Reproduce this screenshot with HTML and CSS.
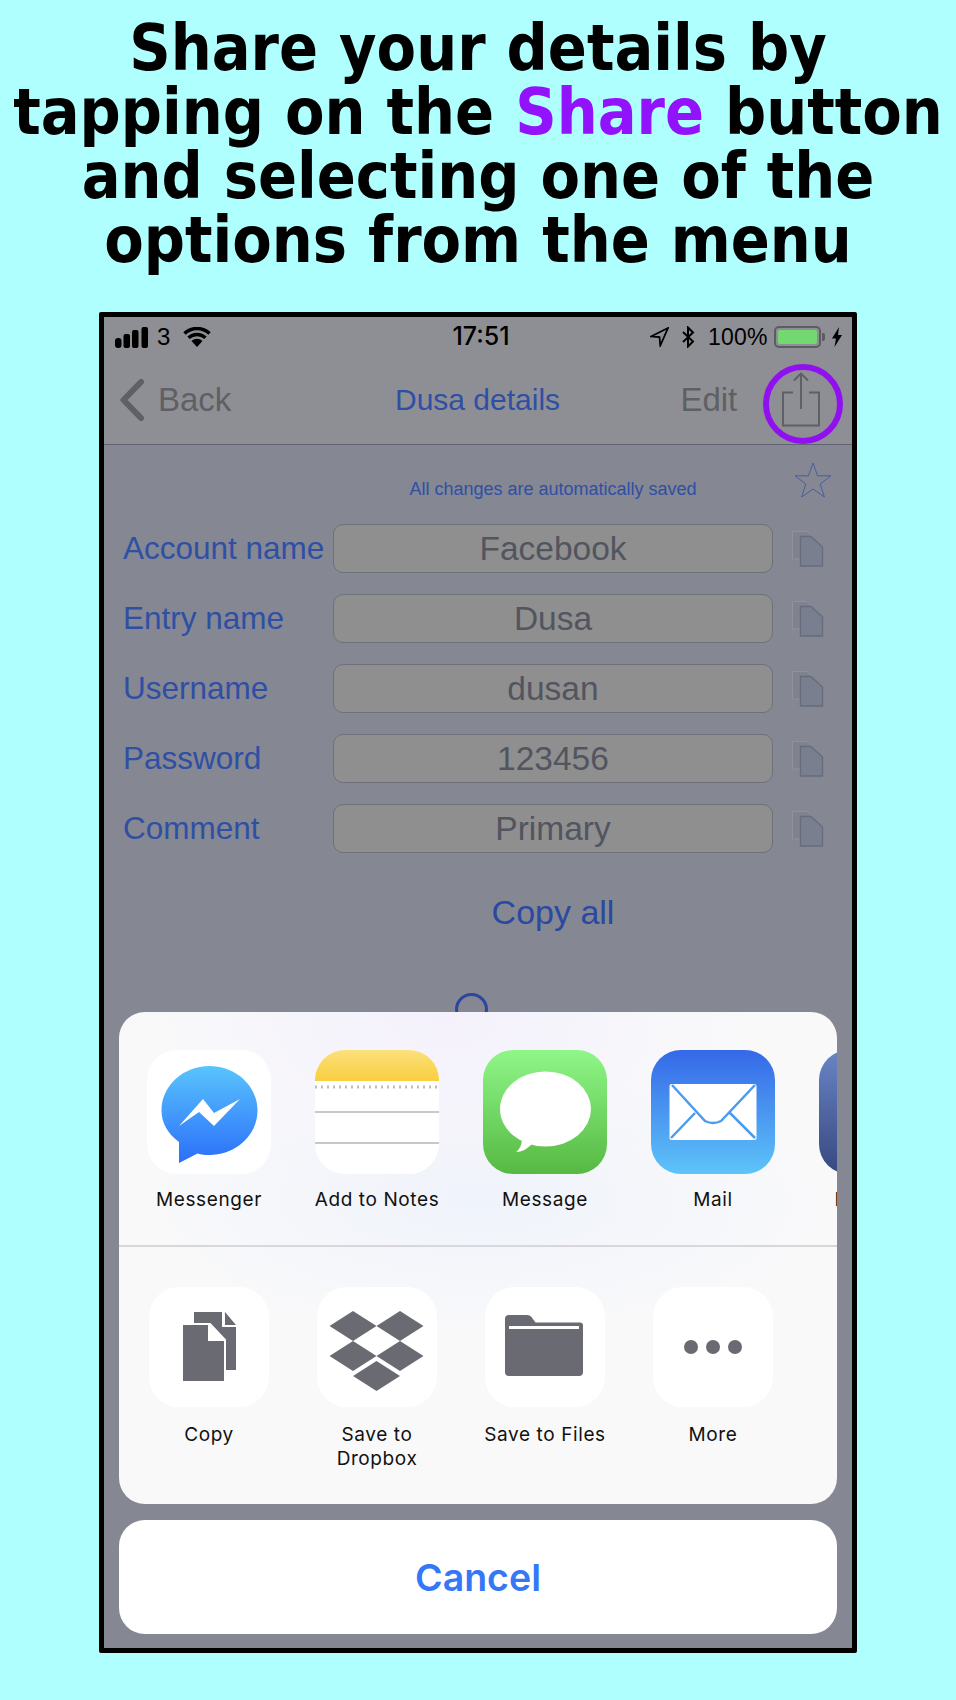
FILE: index.html
```html
<!DOCTYPE html>
<html lang="en">
<head>
<meta charset="utf-8">
<title>Share your details</title>
<link rel="stylesheet" href="styles.css">
</head>
<body>
<h1 class="headline">Share your details by<br>tapping on the <span class="accent">Share</span> button<br>and selecting one of the<br>options from the menu</h1>
<main class="phone">
  <div class="topbar">
    <div class="status">
      <div class="status-left">
        <svg class="signal" width="34" height="21" viewBox="0 0 34 21"><rect x="0" y="11" width="6.500" height="10" rx="3"/><rect x="8.500" y="7" width="6.500" height="14" rx="2"/><rect x="17" y="3" width="6.500" height="18" rx="2"/><rect x="26.500" y="0" width="6.500" height="21" rx="2"/></svg>
        <span class="carrier">3</span>
        <svg class="wifi" width="28" height="20" viewBox="0 0 28 20"><path d="M1.500 6.500a18 18 0 0 1 25 0M5.500 10.800a12.500 12.500 0 0 1 17 0" fill="none" stroke="#000" stroke-width="3.400"/><path d="M14 20L8.500 14a8 8 0 0 1 11 0z"/></svg>
      </div>
      <div class="clock">17:51</div>
      <div class="status-right">
        <svg width="19" height="20" viewBox="0 0 19 20"><path d="M18 1L1 9.500l8.500.5.800 8.500z" fill="none" stroke="#000" stroke-width="1.800"/></svg>
        <svg class="bt" width="14" height="22" viewBox="0 0 14 22"><path d="M2 6l10 9.500-5 5V1.500l5 5L2 16" fill="none" stroke="#000" stroke-width="2"/></svg>
        <span class="percent">100%</span>
        <div class="battery"><div class="battery-fill"></div></div>
        <div class="battery-cap"></div>
        <svg class="bolt" width="10" height="20" viewBox="0 0 10 20"><path d="M7 0L0 11.500h4L2.500 20 10 8H6z"/></svg>
      </div>
    </div>
    <nav class="nav">
      <svg class="chevron" width="24" height="42" viewBox="0 0 24 42"><path d="M21 3L3.500 21 21 39" fill="none" stroke="#5f6064" stroke-width="6" stroke-linecap="round" stroke-linejoin="round"/></svg>
      <span class="nav-back">Back</span>
      <span class="nav-title">Dusa details</span>
      <span class="nav-edit">Edit</span>
      <svg class="share" width="40" height="56" viewBox="0 0 40 56"><path d="M12 20.500H2v33h36v-33H28M20 37V2M13 8.500l7-7 7 7" fill="none" stroke="#5f6064" stroke-width="2"/></svg>
    </nav>
    <div class="ring"></div>
  </div>

  <section class="content">
    <div class="row notice-row">
      <span></span>
      <p class="notice">All changes are automatically saved</p>
      <svg class="star" width="38" height="36" viewBox="0 0 38 36"><path d="M19 1l4.600 12.800H37L26.200 22l4.200 13L19 27 7.600 35l4.200-13L1 13.800h13.400z" fill="none" stroke="#3a53a6" stroke-width=".8"/></svg>
    </div>
    <div class="row"><label class="label">Account name</label><div class="field">Facebook</div><svg class="dup" width="32" height="36" viewBox="0 0 32 36"><use href="#pages"/></svg></div>
    <div class="row"><label class="label">Entry name</label><div class="field">Dusa</div><svg class="dup" width="32" height="36" viewBox="0 0 32 36"><use href="#pages"/></svg></div>
    <div class="row"><label class="label">Username</label><div class="field">dusan</div><svg class="dup" width="32" height="36" viewBox="0 0 32 36"><use href="#pages"/></svg></div>
    <div class="row"><label class="label">Password</label><div class="field">123456</div><svg class="dup" width="32" height="36" viewBox="0 0 32 36"><use href="#pages"/></svg></div>
    <div class="row"><label class="label">Comment</label><div class="field">Primary</div><svg class="dup" width="32" height="36" viewBox="0 0 32 36"><use href="#pages"/></svg></div>
    <div class="row copy-row"><span></span><div class="copy-all">Copy all</div></div>
    <div class="spinner"></div>
  </section>

  <div class="overlay">
    <div class="sheet">
      <div class="apps">
        <div class="cell"><svg class="tile" viewBox="0 0 124 124"><defs><linearGradient id="gm" x1="0" y1="0" x2="0" y2="1"><stop offset="0" stop-color="#5ac4fd"/><stop offset="1" stop-color="#2a6ffa"/></linearGradient></defs><rect width="124" height="124" rx="30" fill="#fff"/><path d="M62.500 16c26.500 0 48 20 48 44.500S89 105 62.500 105c-4.500 0-8-.5-12-1.500L32 113V92C21 84 14.500 73 14.500 60.500 14.500 36 36 16 62.500 16z" fill="url(#gm)"/><path d="M32 76l24-27 11 14 26-14-26 27-15-14z" fill="#fff"/></svg><span class="cap">Messenger</span></div>
        <div class="cell"><svg class="tile" viewBox="0 0 124 124"><defs><linearGradient id="gn" x1="0" y1="0" x2="0" y2="1"><stop offset="0" stop-color="#fbe07c"/><stop offset="1" stop-color="#f9cf3e"/></linearGradient><clipPath id="cn"><rect width="124" height="124" rx="30"/></clipPath></defs><g clip-path="url(#cn)"><rect width="124" height="124" fill="#fff"/><rect width="124" height="31" fill="url(#gn)"/><line x1="0" x2="124" y1="37" y2="37" stroke="#bdbdc2" stroke-width="3" stroke-dasharray="2 4"/><line x1="0" x2="124" y1="62" y2="62" stroke="#c8c7cc" stroke-width="2"/><line x1="0" x2="124" y1="93" y2="93" stroke="#c8c7cc" stroke-width="2"/></g></svg><span class="cap">Add to Notes</span></div>
        <div class="cell"><svg class="tile" viewBox="0 0 124 124"><defs><linearGradient id="gs" x1="0" y1="0" x2="0" y2="1"><stop offset="0" stop-color="#8ff788"/><stop offset="1" stop-color="#55b942"/></linearGradient></defs><rect width="124" height="124" rx="30" fill="url(#gs)"/><ellipse cx="62.500" cy="59" rx="45.500" ry="37.500" fill="#fff"/><path d="M39 88c0 6-2 11-6 14 6 0 11-3 16-8z" fill="#fff"/></svg><span class="cap">Message</span></div>
        <div class="cell"><svg class="tile" viewBox="0 0 124 124"><defs><linearGradient id="gl" x1="0" y1="0" x2="0" y2="1"><stop offset="0" stop-color="#3568e8"/><stop offset="1" stop-color="#5ec4f9"/></linearGradient></defs><rect width="124" height="124" rx="30" fill="url(#gl)"/><rect x="18.500" y="34" width="87" height="56" rx="2" fill="#fff"/><path d="M21 35l33 36q8 4 16 0l34-36M20 88l24-25M104 88L79 63" fill="none" stroke="#4a9cef" stroke-width="2.500"/></svg><span class="cap">Mail</span></div>
        <div class="cell"><svg class="tile" viewBox="0 0 124 124"><defs><linearGradient id="gf" x1="0" y1="0" x2="0" y2="1"><stop offset="0" stop-color="#6a84c6"/><stop offset="1" stop-color="#36487f"/></linearGradient></defs><rect width="124" height="124" rx="30" fill="url(#gf)"/></svg><span class="cap">Facebook</span></div>
      </div>
      <div class="actions">
        <div class="cell"><svg class="tile small" viewBox="0 0 120 120"><rect width="120" height="120" rx="30" fill="#fff"/><path d="M45 25h29l13 14v44H45z" fill="#6a6a72"/><path d="M74 25v14h13" fill="#fff" stroke="#fff" stroke-width="2"/><path d="M76 25l11 13H76z" fill="#6a6a72"/><path d="M33 37h28l15 16v42H33z" fill="#6a6a72" stroke="#fff" stroke-width="2"/><path d="M60 37v16h16" fill="#fff" stroke="#fff" stroke-width="2"/></svg><span class="cap">Copy</span></div>
        <div class="cell"><svg class="tile small" viewBox="0 0 120 120"><rect width="120" height="120" rx="30" fill="#fff"/><path d="M36 24l23.500 15L36 54 12.500 39zM83 24l23.500 15L83 54 59.500 39zM36 54l23.500 15L36 84 12.500 69zM83 54l23.500 15L83 84 59.500 69zM59.500 74l23.500 15-23.500 15L36 89z" fill="#6a6a72"/></svg><span class="cap">Save to<br>Dropbox</span></div>
        <div class="cell"><svg class="tile small" viewBox="0 0 120 120"><rect width="120" height="120" rx="30" fill="#fff"/><path d="M24 28h18q3 0 4.500 2l4 5.500H95q3 0 3 3V85q0 4-4 4H24q-4 0-4-4V32q0-4 4-4z" fill="#6a6a72"/><path d="M24 40.500h70" stroke="#fff" stroke-width="3" fill="none"/></svg><span class="cap">Save to Files</span></div>
        <div class="cell"><svg class="tile small" viewBox="0 0 120 120"><rect width="120" height="120" rx="30" fill="#fff"/><circle cx="38" cy="60" r="7" fill="#6a6a72"/><circle cx="60" cy="60" r="7" fill="#6a6a72"/><circle cx="82" cy="60" r="7" fill="#6a6a72"/></svg><span class="cap">More</span></div>
      </div>
    </div>
    <button class="cancel" type="button">Cancel</button>
  </div>
</main>
<svg class="defs" width="0" height="0"><defs><g id="pages"><path d="M.5.500H15l5 5V28H.5z" fill="#7f828f" stroke="#8f919c" stroke-width="1"/><path d="M8.500 5.500H19L30.500 16v19H8.500z" fill="#797f8f" stroke="#666c7e" stroke-width="1.300"/></g></defs></svg>
</body>
</html>
```

FILE: styles.css
```css
* { box-sizing: border-box; }
html, body { margin: 0; padding: 0; }
body {
  width: 956px;
  height: 1700px;
  background: #b0ffff;
  font-family: "Liberation Sans", Arial, sans-serif;
  overflow: hidden;
}
.headline {
  margin: 0;
  height: 312px;
  padding-top: 16px;
  text-align: center;
  font-family: "DejaVu Sans", sans-serif;
  font-stretch: condensed;
  font-weight: 700;
  font-size: 64px;
  word-spacing: 1px;
  line-height: 64px;
  color: #000;
  white-space: nowrap;
}
.accent { color: #9212fb; }
.phone {
  position: relative;
  margin-left: 99px;
  width: 758px;
  height: 1341px;
  border: 5px solid #000;
  border-radius: 2px;
  background: #858792;
  overflow: hidden;
}
.topbar {
  position: relative;
  height: 128px;
  background: #8e8f94;
  border-bottom: 1px solid #5f6270;
}
.status {
  height: 40px;
  display: flex;
  align-items: center;
  justify-content: space-between;
  padding: 0 10px 0 11px;
  color: #000;
  font-size: 22px;
  position: relative;
}
.status-left, .status-right { display: flex; align-items: center; }
.status-left { gap: 8px; }
.carrier { width: 17px; font-size: 24px; }
.wifi { margin-left: 1px; }
.clock {
  position: absolute;
  left: 0;
  right: 0;
  top: 4px;
  padding-left: 6px;
  text-align: center;
  font-family: "Inter", sans-serif;
  font-weight: 500;
  font-size: 25px;
  line-height: 30px;
}
.bt { margin-left: 12px; }
.percent { margin-left: 13px; font-size: 23px; letter-spacing: .2px; width: 66px; }
.battery {
  width: 47px;
  height: 22px;
  border: 2px solid #5c5d60;
  border-radius: 5px;
  padding: 2px;
}
.battery-fill { width: 100%; height: 100%; background: #74d872; border-radius: 2px; }
.battery-cap { width: 3px; height: 8px; background: #5c5d60; margin-left: 1px; border-radius: 0 2px 2px 0; }
.bolt { margin-left: 7px; }
.nav {
  position: relative;
  display: flex;
  align-items: center;
  height: 85px;
  padding-left: 16px;
}
.nav-back { margin-left: 14px; font-size: 33px; color: #5f6064; }
.nav-title {
  position: absolute;
  left: 291px;
  font-size: 30px;
  color: #2f4fa5;
}
.nav-edit { margin-left: 449px; font-size: 33px; color: #5f6064; }
.share { margin-left: 44px; }
.ring {
  position: absolute;
  left: 659px;
  top: 47px;
  width: 80px;
  height: 80px;
  border: 6px solid #9010ef;
  border-radius: 50%;
}
.content { padding: 16px 0 0 19px; }
.row {
  display: grid;
  grid-template-columns: 210px 440px 52px;
  align-items: center;
  margin-bottom: 21px;
}
.notice-row { height: 36px; margin-bottom: 27px; }
.notice { margin: 0; text-align: center; font-size: 18px; color: #2f4fa5; padding: 18px 0 0 0; white-space: nowrap; }
.star { margin: -2px 0 0 21px; }
.label { font-size: 31.500px; color: #2f4fa5; white-space: nowrap; }
.field {
  height: 49px;
  border: 1px solid #6f7178;
  border-radius: 10px;
  background: #8f8f8f;
  text-align: center;
  font-size: 33.500px;
  line-height: 47px;
  color: #525560;
}
.dup { margin-left: 19px; }
.copy-row { margin: 39px 0 0; }
.copy-all { text-align: center; font-size: 34px; line-height: 40px; color: #2a49a0; }
.spinner {
  width: 33px;
  height: 33px;
  margin: 61px 0 0 332px;
  border: 3px solid #2a46a0;
  border-radius: 50%;
}
.overlay {
  position: absolute;
  left: 15px;
  right: 15px;
  top: 695px;
}
.sheet {
  height: 492px;
  border-radius: 26px;
  overflow: hidden;
  background:
    radial-gradient(ellipse 300px 200px at 45% 0, #f4f1fc, transparent),
    radial-gradient(ellipse 340px 130px at 50% 190px, #eff3fb, transparent),
    #f9f9fa;
}
.apps {
  height: 235px;
  padding: 38px 0 0 28px;
  border-bottom: 2px solid #d7d7dd;
  display: flex;
  gap: 44px;
  width: 1000px;
}
.actions {
  padding: 40px 0 0 28px;
  display: flex;
  gap: 44px;
}
.cell { width: 124px; flex: none; display: flex; flex-direction: column; align-items: center; }
.tile { width: 124px; height: 124px; display: block; }
.tile.small { width: 120px; height: 120px; }
.cap {
  margin-top: 14px;
  font-family: "Inter", sans-serif;
  font-size: 19px;
  letter-spacing: .6px;
  line-height: 24px;
  color: #111;
  text-align: center;
  white-space: nowrap;
}
.small + .cap { margin-top: 16px; }
.cancel {
  display: block;
  width: 100%;
  height: 114px;
  margin-top: 16px;
  border: 0;
  border-radius: 26px;
  background: #fff;
  font-family: "Inter", sans-serif;
  font-weight: 600;
  font-size: 37.500px;
  color: #3478f6;
}
.defs { position: absolute; }
```
